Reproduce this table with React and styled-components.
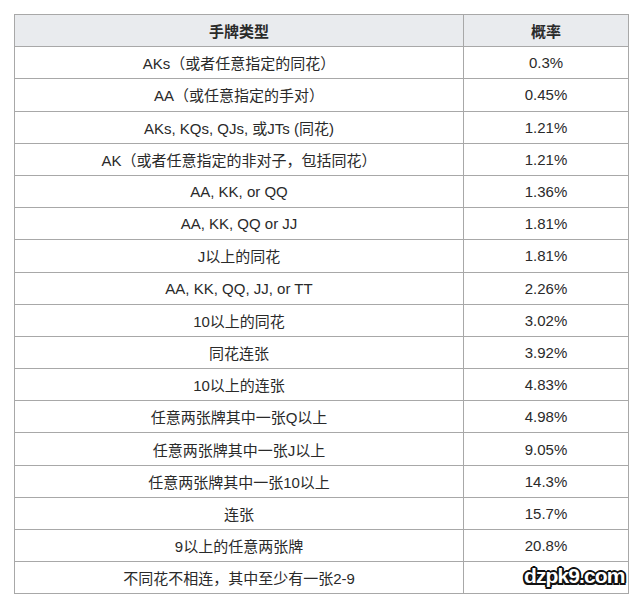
import styled, { createGlobalStyle } from 'styled-components';

const rows = [
  ['AKs（或者任意指定的同花）', '0.3%'],
  ['AA（或任意指定的手对）', '0.45%'],
  ['AKs, KQs, QJs, 或JTs (同花)', '1.21%'],
  ['AK（或者任意指定的非对子，包括同花）', '1.21%'],
  ['AA, KK, or QQ', '1.36%'],
  ['AA, KK, QQ or JJ', '1.81%'],
  ['J以上的同花', '1.81%'],
  ['AA, KK, QQ, JJ, or TT', '2.26%'],
  ['10以上的同花', '3.02%'],
  ['同花连张', '3.92%'],
  ['10以上的连张', '4.83%'],
  ['任意两张牌其中一张Q以上', '4.98%'],
  ['任意两张牌其中一张J以上', '9.05%'],
  ['任意两张牌其中一张10以上', '14.3%'],
  ['连张', '15.7%'],
  ['9以上的任意两张牌', '20.8%'],
  ['不同花不相连，其中至少有一张2-9', ''],
];

const GlobalStyle = createGlobalStyle`
  body {
    margin: 0;
    background: #ffffff;
    font-family: "Liberation Sans", "Noto Sans CJK SC", sans-serif;
  }
`;

const Page = styled.div`
  position: relative;
  width: 640px;
  height: 602px;
  padding: 14px 0 0 14px;
  box-sizing: border-box;
`;

const Table = styled.table`
  width: 615px;
  border-collapse: collapse;
  border: 1px solid #a8a8a8;
  color: #2a2a2a;
  font-size: 15px;
`;

const Row = styled.tr`
  height: 32.2px;
  background: ${(p) => (p.$head ? '#e9ebee' : '#ffffff')};
`;

const Cell = styled.td`
  border: 1px solid #a8a8a8;
  padding: 0;
  text-align: center;
  vertical-align: middle;
  font-weight: ${(p) => (p.$head ? 700 : 400)};
  width: ${(p) => (p.$narrow ? '164px' : 'auto')};
`;

const Watermark = styled.div`
  position: absolute;
  left: 524px;
  top: 564px;
  font-family: "Liberation Sans", sans-serif;
  font-weight: 700;
  font-size: 21px;
  letter-spacing: -0.9px;
  color: #ffffff;
  text-shadow:
    2px 0 0 #111, -2px 0 0 #111, 0 2px 0 #111, 0 -2px 0 #111,
    1.5px 1.5px 0 #111, -1.5px 1.5px 0 #111, 1.5px -1.5px 0 #111, -1.5px -1.5px 0 #111;
`;

export default function App() {
  return (
    <Page>
      <GlobalStyle />
      <Table>
        <tbody>
          <Row $head>
            <Cell $head>手牌类型</Cell>
            <Cell $head $narrow>概率</Cell>
          </Row>
          {rows.map(([hand, prob], i) => (
            <Row key={i}>
              <Cell>{hand}</Cell>
              <Cell $narrow>{prob}</Cell>
            </Row>
          ))}
        </tbody>
      </Table>
      <Watermark>dzpk9.com</Watermark>
    </Page>
  );
}
